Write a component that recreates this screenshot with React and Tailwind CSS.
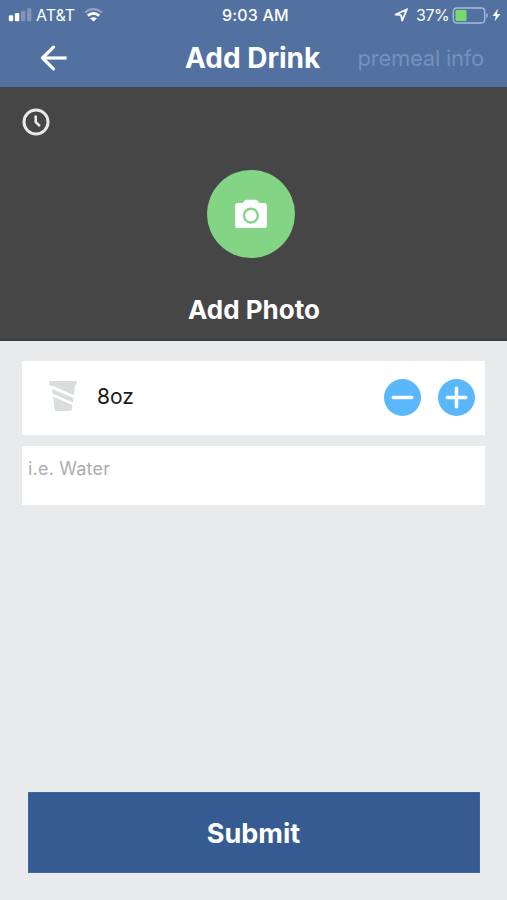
import { useState } from 'react';

function SignalIcon() {
    return (
        <svg width="24" height="14" viewBox="0 0 24 14" fill="#fff">
            <rect x="0.8" y="7.2" width="4.4" height="6" rx="1.2" />
            <rect x="6.9" y="5" width="4.4" height="8.2" rx="1.2" />
            <rect x="13" y="2.7" width="4.4" height="10.5" rx="1.2" opacity="0.27" />
            <rect x="19" y="0.3" width="4.4" height="12.9" rx="1.2" opacity="0.27" />
        </svg>
    );
}

function WifiIcon() {
    return (
        <svg width="19" height="14" viewBox="0 0 19 14" fill="none" stroke="#fff">
            <path d="M1.2 4.7C5.6 0 13.4 0 17.8 4.7" strokeWidth="2.3" opacity="0.35" />
            <path d="M3.9 7.8C7.1 4.6 11.9 4.6 15.1 7.8" strokeWidth="2.8" />
            <path d="M9.5 13.6L6.1 10.5C8 8.9 11 8.9 12.9 10.5Z" fill="#fff" stroke="none" />
        </svg>
    );
}

function LocationIcon() {
    return (
        <svg width="14" height="14" viewBox="0 0 14 14" fill="none" stroke="#f3f7fd" strokeWidth="1.8" strokeLinejoin="round">
            <path d="M13 1.2L1.6 6.6L7 7.2L8.2 12.7Z" />
        </svg>
    );
}

function BatteryIcon() {
    return (
        <svg width="37" height="17" viewBox="0 0 37 17" fill="none">
            <rect x="1.3" y="1" width="31.4" height="15" rx="3.2" stroke="#a6bde0" strokeWidth="1.3" />
            <path d="M34.4 6V11C36.3 10.4 36.3 6.6 34.4 6Z" fill="#a6bde0" />
            <rect x="3.4" y="3" width="11.2" height="11" rx="1" fill="#76da6f" />
        </svg>
    );
}

function BoltIcon() {
    return (
        <svg width="9" height="14" viewBox="0 0 9 14" fill="#fff">
            <path d="M5.9 0.8L0.5 7.9H3.8L2.7 13.2L8.5 5.9H5Z" />
        </svg>
    );
}

function BackIcon() {
    return (
        <svg width="28" height="26" viewBox="0 0 28 26" fill="none" stroke="#fff" strokeWidth="3.2" strokeLinecap="round" strokeLinejoin="round">
            <path d="M13.5 2.2L2.5 13L13.5 23.8" />
            <path d="M2.8 13H26.6" strokeLinecap="butt" />
        </svg>
    );
}

function ClockIcon() {
    return (
        <svg width="28" height="28" viewBox="0 0 28 28" fill="none" stroke="#e9e9e9">
            <circle cx="14" cy="14" r="12" strokeWidth="3" />
            <path d="M13.7 7.5V14L17.9 18.2" strokeWidth="2.6" />
        </svg>
    );
}

function CameraIcon() {
    return (
        <svg width="32" height="30" viewBox="0 0 32 30">
            <path
                d="M2.8 4H8L9.5 1.8Q10.2 0.8 11.3 0.8H20.9Q22 0.8 22.7 1.8L24.2 4H29.2Q31.9 4 31.9 6.7V26.4Q31.9 29.1 29.2 29.1H2.8Q0.1 29.1 0.1 26.4V6.7Q0.1 4 2.8 4Z"
                fill="#fff"
            />
            <circle cx="15.9" cy="16.6" r="6.9" fill="none" stroke="#84d486" strokeWidth="2.4" />
        </svg>
    );
}

function CupIcon() {
    return (
        <svg width="28" height="32" viewBox="0 0 28 32" fill="#d9dddc">
            <path d="M1 1H27.2Q28 1 27.8 2L27 5.2H26L24.9 15.2L3.8 5.8H0.8L0.1 2Q0 1 1 1Z" />
            <path d="M3 9L24.3 18L23.9 22.4L3.7 13.8Z" />
            <path d="M4.2 16.8L23.4 25L22.9 29.5Q22.7 31 21.2 31H7.6Q5.9 31 5.7 29.5Z" />
        </svg>
    );
}

function StepButton({ label, path, onClick }) {
    return (
        <button type="button" aria-label={label} onClick={onClick} className="size-[37px] rounded-full bg-[#5bb7fb]">
            <svg width="37" height="37" viewBox="0 0 37 37" fill="none" stroke="#fff" strokeWidth="3.5" strokeLinecap="round">
                <path d={path} />
            </svg>
        </button>
    );
}

function StatusBar() {
    return (
        <div className="flex h-[30px] items-center pl-2 pr-[6px] text-base leading-none">
            <div className="flex w-[214px] items-center">
                <SignalIcon />
                <span className="ml-[4px] w-[40px] whitespace-nowrap">AT&amp;T</span>
                <span className="ml-[8px]">
                    <WifiIcon />
                </span>
            </div>
            <span className="whitespace-nowrap font-medium tracking-[0.2px]">9:03 AM</span>
            <div className="ml-auto flex items-center">
                <LocationIcon />
                <span className="ml-[8px] w-[32px] whitespace-nowrap tracking-[-0.5px]">37%</span>
                <span className="ml-[4px]">
                    <BatteryIcon />
                </span>
                <span className="ml-[3px]">
                    <BoltIcon />
                </span>
            </div>
        </div>
    );
}

export default function App() {
    const [ounces, setOunces] = useState(8);
    const [drink, setDrink] = useState('');

    return (
        <div className="flex h-[900px] w-[507px] flex-col overflow-hidden bg-[#e9eaeb] font-['Inter',sans-serif]">
            <header className="h-[87px] bg-[#5271a0] text-white">
                <StatusBar />
                <div className="flex h-[56px] items-center pl-[40px] pr-[23px]">
                    <button type="button" aria-label="Back">
                        <BackIcon />
                    </button>
                    <h1 className="ml-[117px] whitespace-nowrap text-[28px] font-bold leading-none">Add Drink</h1>
                    <button type="button" className="ml-auto whitespace-nowrap text-[22px] leading-none tracking-[-0.25px] text-[#7690bc]">
                        premeal info
                    </button>
                </div>
            </header>

            <section className="relative flex h-[254px] flex-col items-center border-b-2 border-[#3c3b3b] bg-[#464646] pt-[83px]">
                <span className="absolute left-[22px] top-[21px]">
                    <ClockIcon />
                </span>
                <button type="button" aria-label="Camera" className="mr-[5px] flex size-[88px] items-center justify-center rounded-full bg-[#84d486]">
                    <CameraIcon />
                </button>
                <p className="mt-[39px] whitespace-nowrap pl-px text-[26px] font-bold leading-none text-white">Add Photo</p>
            </section>

            <main className="flex flex-1 flex-col px-[22px] pt-5">
                <div className="flex h-[74px] w-[463px] items-center bg-white pb-[4px] pl-[27px] pr-[10px]">
                    <CupIcon />
                    <span className="ml-5 text-[21px] leading-none text-[#1b1b1b]">{ounces}oz</span>
                    <div className="ml-auto flex gap-[17px] pt-[3px]">
                        <StepButton label="Less" path="M9.3 18.5H27.7" onClick={() => setOunces(Math.max(0, ounces - 1))} />
                        <StepButton label="More" path="M9.3 18.5H27.7M18.5 9.3V27.7" onClick={() => setOunces(ounces + 1)} />
                    </div>
                </div>
                <textarea
                    value={drink}
                    onChange={(event) => setDrink(event.target.value)}
                    placeholder="i.e. Water"
                    className="mt-[11px] h-[59px] w-[463px] resize-none bg-white px-[6px] pt-[10px] text-[18px] leading-[26px] tracking-[0.2px] text-[#1b1b1b] outline-none placeholder:text-[#adadad]"
                />
                <button
                    type="button"
                    className="mx-[6px] mb-[27px] mt-auto h-[81px] w-[452px] border border-[#3f66a0] bg-[#365b92] pr-px pt-px text-[27px] font-bold leading-none text-white"
                >
                    Submit
                </button>
            </main>
        </div>
    );
}
